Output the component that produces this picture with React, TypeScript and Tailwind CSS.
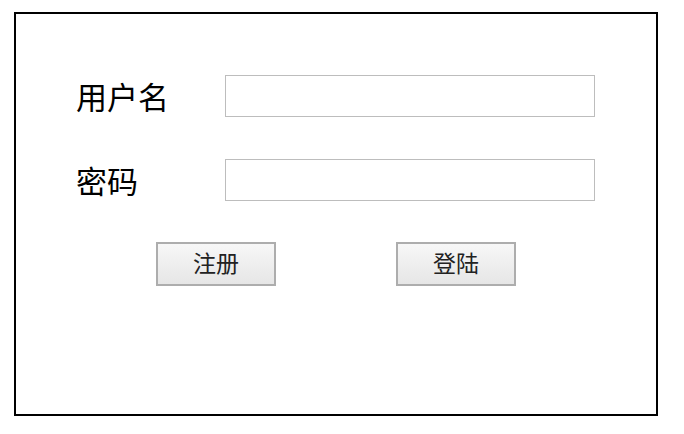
export default function App() {
  return (
    <div className="min-h-screen bg-white pt-3 pl-[14px] font-['Noto_Sans_CJK_SC','Noto_Sans',sans-serif]">
      <div className="w-[644px] h-[404px] border-2 border-black pt-[61px] pl-[60px]">
        <div className="grid grid-cols-[149px_370px] gap-y-[42px] items-center">
          <label className="text-[31px] leading-none text-black -mt-[2px]">用户名</label>
          <input
            type="text"
            className="w-[370px] h-[42px] border border-[#bdbdbd] bg-white outline-none"
          />
          <label className="text-[31px] leading-none text-black -mt-[2px]">密码</label>
          <input
            type="password"
            className="w-[370px] h-[42px] border border-[#bdbdbd] bg-white outline-none"
          />
        </div>
        <div className="mt-[41px] flex gap-[120px] pl-[80px]">
          <button className="w-[120px] h-[44px] border-2 border-[#adadad] bg-gradient-to-b from-[#f7f7f7] to-[#e6e6e6] text-[23px] leading-none text-[#222] pb-[3px]">
            注册
          </button>
          <button className="w-[120px] h-[44px] border-2 border-[#adadad] bg-gradient-to-b from-[#f7f7f7] to-[#e6e6e6] text-[23px] leading-none text-[#222] pb-[3px]">
            登陆
          </button>
        </div>
      </div>
    </div>
  );
}
